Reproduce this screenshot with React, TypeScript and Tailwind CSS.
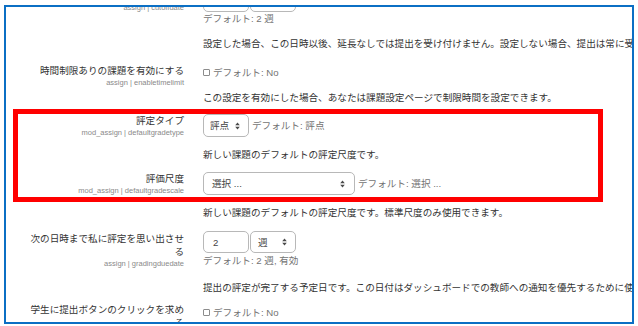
import type { ReactNode } from 'react';

function Arrows() {
  return (
    <svg width="5" height="8" viewBox="0 0 5 8" className="shrink-0">
      <path d="M2.5 0.5 L4.8 3.2 L0.2 3.2 Z M0.2 4.8 L4.8 4.8 L2.5 7.5 Z" fill="#4a4a4a" />
    </svg>
  );
}

function Row({
  label,
  code,
  className,
  labelClass,
  children,
}: {
  label: string;
  code: string;
  className: string;
  labelClass: string;
  children: ReactNode;
}) {
  return (
    <div className={`flex ${className}`}>
      <div className={`ml-[22px] w-[156px] shrink-0 text-right ${labelClass}`}>
        <div className="text-[9.6px] leading-[13px] text-[#333]">{label}</div>
        <div className="text-[7.5px] leading-[11px] text-[#8a8a8a]">{code}</div>
      </div>
      <div className="ml-[19px] min-w-0 flex-1">{children}</div>
    </div>
  );
}

function Desc({ text, className }: { text: string; className: string }) {
  return (
    <div className={`whitespace-nowrap text-[9.6px] leading-[13px] text-[#333] ${className}`}>{text}</div>
  );
}

function Default({ text, className = '' }: { text: string; className?: string }) {
  return <span className={`text-[9.6px] leading-[13px] text-[#737373] ${className}`}>{text}</span>;
}

function Check() {
  return (
    <div className="flex items-center text-[9.6px] leading-[13px]">
      <span className="h-[7px] w-[7px] rounded-[1px] border border-[#8c8c8c] bg-white" />
      <Default text="デフォルト: No" className="ml-[3px]" />
    </div>
  );
}

export default function App() {
  return (
    <div className="relative h-[326px] w-[638px] overflow-hidden bg-white text-[9.6px] leading-[13px] font-['Liberation_Sans','Noto_Sans_CJK_JP',sans-serif]">
      <div className="ml-[4px] mt-[5px] h-[319px] w-[630px] overflow-hidden border-2 border-[#0b6fc4]">
        <div className="flex flex-col">
          <Row label="提出遮断日" code="assign | cutoffdate" className="mt-[-18px]" labelClass="">
            <div className="flex h-[23px]">
              <div className="h-[23px] w-[46px] rounded-[5px] border border-[#b8b8b8]" />
              <div className="ml-[1px] h-[23px] w-[46px] rounded-[5px] border border-[#b8b8b8]" />
            </div>
            <div>
              <Default text="デフォルト: 2 週" />
            </div>
            <Desc
              className="mt-[12px]"
              text="設定した場合、この日時以後、延長なしでは提出を受け付けません。設定しない場合、提出は常に受け付けられます。"
            />
          </Row>

          <Row
            label="時間制限ありの課題を有効にする"
            code="assign | enabletimelimit"
            className="mt-[14px]"
            labelClass=""
          >
            <div className="pt-[2px]">
              <Check />
            </div>
            <Desc
              className="mt-[12px]"
              text="この設定を有効にした場合、あなたは課題設定ページで制限時間を設定できます。"
            />
          </Row>

          <Row label="評定タイプ" code="mod_assign | defaultgradetype" className="mt-[10px]" labelClass="">
            <div className="flex items-center">
              <div className="flex h-[23px] w-[46px] items-center justify-between rounded-[5px] border border-[#b8b8b8] pl-[6px] pr-[8px] text-[9.6px] text-[#444]">
                <span>評点</span>
                <Arrows />
              </div>
              <Default text="デフォルト: 評点" className="ml-[3px]" />
            </div>
            <Desc className="mt-[11px]" text="新しい課題のデフォルトの評定尺度です。" />
          </Row>

          <Row label="評価尺度" code="mod_assign | defaultgradescale" className="mt-[11px]" labelClass="">
            <div className="flex items-center">
              <div className="flex h-[23px] w-[152px] items-center justify-between rounded-[5px] border border-[#b8b8b8] pl-[8px] pr-[9px] text-[9.6px] text-[#444]">
                <span>選択 ...</span>
                <Arrows />
              </div>
              <Default text="デフォルト: 選択 ..." className="ml-[3px]" />
            </div>
            <Desc className="mt-[11px]" text="新しい課題のデフォルトの評定尺度です。標準尺度のみ使用できます。" />
          </Row>

          <Row
            label="次の日時まで私に評定を思い出させる"
            code="assign | gradingduedate"
            className="mt-[12px]"
            labelClass="pt-[1px]"
          >
            <div className="flex">
              <div className="flex h-[22px] w-[46px] items-center rounded-[5px] border border-[#b8b8b8] pl-[9px] text-[9.6px] text-[#444]">
                2
              </div>
              <div className="ml-[1px] flex h-[22px] w-[46px] items-center justify-between rounded-[5px] border border-[#b8b8b8] pl-[7px] pr-[8px] text-[9.6px] text-[#444]">
                <span>週</span>
                <Arrows />
              </div>
            </div>
            <div className="mt-[1px]">
              <Default text="デフォルト: 2 週, 有効" />
            </div>
            <Desc
              className="mt-[14px]"
              text="提出の評定が完了する予定日です。この日付はダッシュボードでの教師への通知を優先するために使用されます。"
            />
          </Row>

          <Row
            label="学生に提出ボタンのクリックを求める"
            code="assign | requiresubmissionstatement"
            className="mt-[9px]"
            labelClass=""
          >
            <div className="pt-[3px]">
              <Check />
            </div>
          </Row>
        </div>
      </div>
      <div className="absolute left-[13px] top-[109px] h-[93px] w-[590px] border-[5px] border-[#ff0000]" />
    </div>
  );
}
